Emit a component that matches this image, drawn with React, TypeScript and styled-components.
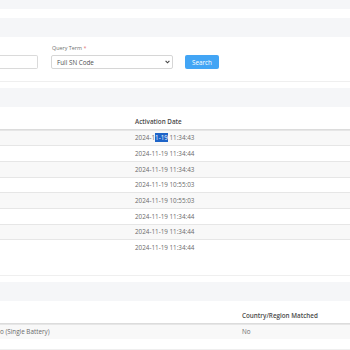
import styled, { createGlobalStyle } from "styled-components";

const GlobalStyle = createGlobalStyle`
  html, body {
    margin: 0;
    padding: 0;
    background: #ffffff;
  }
  body {
    font-family: "Open Sans", "Noto Sans", sans-serif;
    color: #666;
    overflow: hidden;
  }
`;

const dates = [
  null,
  "2024-11-19 11:34:44",
  "2024-11-19 11:34:43",
  "2024-11-19 10:55:03",
  "2024-11-19 10:55:03",
  "2024-11-19 11:34:44",
  "2024-11-19 11:34:44",
  "2024-11-19 11:34:44",
];

function App() {
  return (
    <Page>
      <GlobalStyle />
      <TopStrip />

      <Card>
        <CardHeader />
        <FormBody>
          <Field>
            <TextInput />
          </Field>
          <Field>
            <Label>
              Query Term <Required>*</Required>
            </Label>
            <SelectBox>
              <span>Full SN Code</span>
              <svg width="5" height="4" viewBox="0 0 5 4">
                <polyline
                  points="0.6,0.8 2.5,2.8 4.4,0.8"
                  fill="none"
                  stroke="#444"
                  strokeWidth="1.1"
                />
              </svg>
            </SelectBox>
          </Field>
          <SearchButton>Search</SearchButton>
        </FormBody>
      </Card>

      <Card>
        <CardHeader />
        <TableBody $bottom={20}>
          <HeadRow $cols="132px 1fr">
            <HeadCell />
            <HeadCell>Activation Date</HeadCell>
          </HeadRow>
          {dates.map((d, i) => (
            <Row key={i} $cols="132px 1fr" $striped={i % 2 === 0}>
              <Cell />
              <Cell>
                {d ?? (
                  <>
                    2024-1<Picked>1-19</Picked> 11:34:43
                  </>
                )}
              </Cell>
            </Row>
          ))}
        </TableBody>
      </Card>

      <Card>
        <CardHeader />
        <TableBody $bottom={10}>
          <HeadRow $cols="239px 1fr">
            <HeadCell />
            <HeadCell>Country/Region Matched</HeadCell>
          </HeadRow>
          <Row $cols="239px 1fr" $striped>
            <Cell $flush>o (Single Battery)</Cell>
            <Cell>No</Cell>
          </Row>
        </TableBody>
      </Card>
    </Page>
  );
}

export default App;

const Page = styled.div`
  width: 350px;
  height: 350px;
  overflow: hidden;
  background: #fff;
`;

const TopStrip = styled.div`
  height: 9px;
  background: #f5f6f8;
`;

const Card = styled.section`
  margin-top: 9px;
  border-bottom: 1px solid #efefef;

  & + & {
    margin-top: 6px;
  }
`;

const CardHeader = styled.div`
  height: 19px;
  background: #f5f6f8;
`;

const FormBody = styled.div`
  display: flex;
  align-items: flex-end;
  gap: 13px;
  padding: 8px 0 12px 0;
`;

const Field = styled.div`
  display: flex;
  flex-direction: column;
  gap: 3px;
`;

const Label = styled.label`
  font-size: 5.4px;
  line-height: 7px;
  color: #707070;
  padding-left: 1px;
`;

const Required = styled.span`
  color: #e57373;
`;

const TextInput = styled.input`
  box-sizing: border-box;
  width: 38px;
  height: 14px;
  border: 1px solid #dadada;
  border-left: none;
  border-radius: 0 2px 2px 0;
  background: #fff;
  outline: none;
`;

const SelectBox = styled.div`
  box-sizing: border-box;
  width: 122px;
  height: 14px;
  display: flex;
  align-items: center;
  justify-content: space-between;
  padding: 0 2px 0 5px;
  border: 1px solid #d6d6d6;
  border-radius: 2px;
  font-size: 6.3px;
  color: #505050;
`;

const SearchButton = styled.button`
  box-sizing: border-box;
  width: 34px;
  height: 14px;
  padding: 0;
  border: none;
  border-radius: 2px;
  background: #42a5f5;
  color: #fff;
  font-family: inherit;
  font-size: 6.3px;
  margin-left: -1px;
`;

const TableBody = styled.div<{ $bottom: number }>`
  padding-bottom: ${(p) => p.$bottom}px;
`;

const HeadRow = styled.div<{ $cols: string }>`
  display: grid;
  grid-template-columns: ${(p) => p.$cols};
  border-bottom: 1px solid #dcdcdc;
`;

const HeadCell = styled.div`
  padding: 9.5px 3px 3px;
  line-height: 9px;
  font-size: 6.3px;
  font-weight: 600;
  color: #4a4a4a;
  white-space: nowrap;
`;

const Row = styled.div<{ $cols: string; $striped?: boolean }>`
  box-sizing: border-box;
  display: grid;
  grid-template-columns: ${(p) => p.$cols};
  align-items: center;
  height: 15.7px;
  border-top: 1px solid #e6e6e6;
  background: ${(p) => (p.$striped ? "#f8f8f8" : "#fff")};
`;

const Cell = styled.div<{ $flush?: boolean }>`
  padding: 0 3px 0 ${(p) => (p.$flush ? 0 : 3)}px;
  font-size: 6.3px;
  line-height: 9px;
  color: #6a6a6a;
  white-space: nowrap;
`;

const Picked = styled.span`
  background: #1e64c8;
  color: #fff;
`;
